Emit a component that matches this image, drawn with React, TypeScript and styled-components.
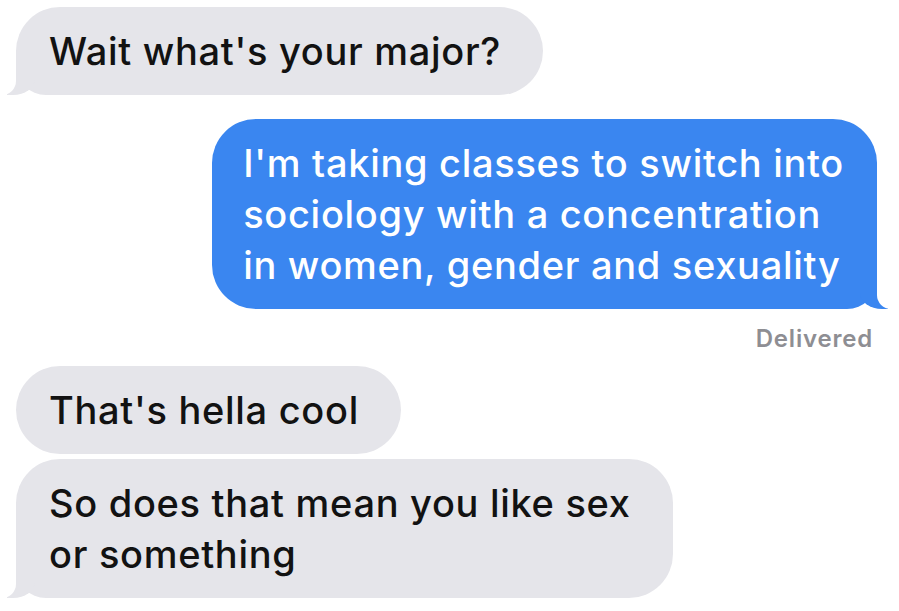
import styled, { createGlobalStyle } from "styled-components";

const GlobalStyle = createGlobalStyle`
  html, body {
    margin: 0;
    padding: 0;
    background: #ffffff;
  }
  body {
    font-family: Inter, "Liberation Sans", sans-serif;
    -webkit-font-smoothing: antialiased;
  }
`;

const Thread = styled.div`
  width: 899px;
  height: 611px;
  box-sizing: border-box;
  padding: 7px 22px 0 16px;
  display: flex;
  flex-direction: column;
  overflow: hidden;
  background: #ffffff;
`;

interface BubbleProps {
  $sent?: boolean;
  $tail?: boolean;
  $gap?: number;
}

const blue = "#3a86f0";
const grey = "#e5e5ea";

const Bubble = styled.div<BubbleProps>`
  position: relative;
  align-self: ${(p) => (p.$sent ? "flex-end" : "flex-start")};
  margin-top: ${(p) => p.$gap ?? 0}px;
  padding: ${(p) => (p.$sent ? "19px 33px 18px 31px" : "19px 42px 18px 33px")};
  border-radius: 44px;
  ${(p) =>
    p.$tail &&
    (p.$sent
      ? "border-bottom-right-radius: 30px;"
      : "border-bottom-left-radius: 30px;")}
  background: ${(p) => (p.$sent ? blue : grey)};
  color: ${(p) => (p.$sent ? "#ffffff" : "#121212")};
  font-size: 38px;
  font-weight: 500;
  line-height: 51px;
  letter-spacing: 0.7px;
  white-space: nowrap;

  &::before,
  &::after {
    content: "";
    display: ${(p) => (p.$tail ? "block" : "none")};
    position: absolute;
    bottom: 0;
    height: 30px;
  }

  &::before {
    width: 28px;
    background: ${(p) => (p.$sent ? blue : grey)};
    ${(p) =>
      p.$sent
        ? "right: -11px; border-bottom-left-radius: 22px 16px;"
        : "left: -9px; border-bottom-right-radius: 22px 16px;"}
  }

  &::after {
    width: 30px;
    background: #ffffff;
    ${(p) =>
      p.$sent
        ? "right: -30px; border-bottom-left-radius: 14px;"
        : "left: -30px; border-bottom-right-radius: 14px;"}
  }
`;

const Status = styled.div`
  align-self: flex-end;
  margin: 16px 4px 0 0;
  font-size: 24px;
  line-height: 28px;
  font-weight: 600;
  letter-spacing: 0.8px;
  color: #8e8e93;
`;

export default function App() {
  return (
    <>
      <GlobalStyle />
      <Thread>
        <Bubble $tail>Wait what's your major?</Bubble>
        <Bubble $sent $tail $gap={24}>
          I'm taking classes to switch into
          <br />
          sociology with a concentration
          <br />
          in women, gender and sexuality
        </Bubble>
        <Status>Delivered</Status>
        <Bubble $gap={13}>That's hella cool</Bubble>
        <Bubble $tail $gap={5}>
          So does that mean you like sex
          <br />
          or something
        </Bubble>
      </Thread>
    </>
  );
}
